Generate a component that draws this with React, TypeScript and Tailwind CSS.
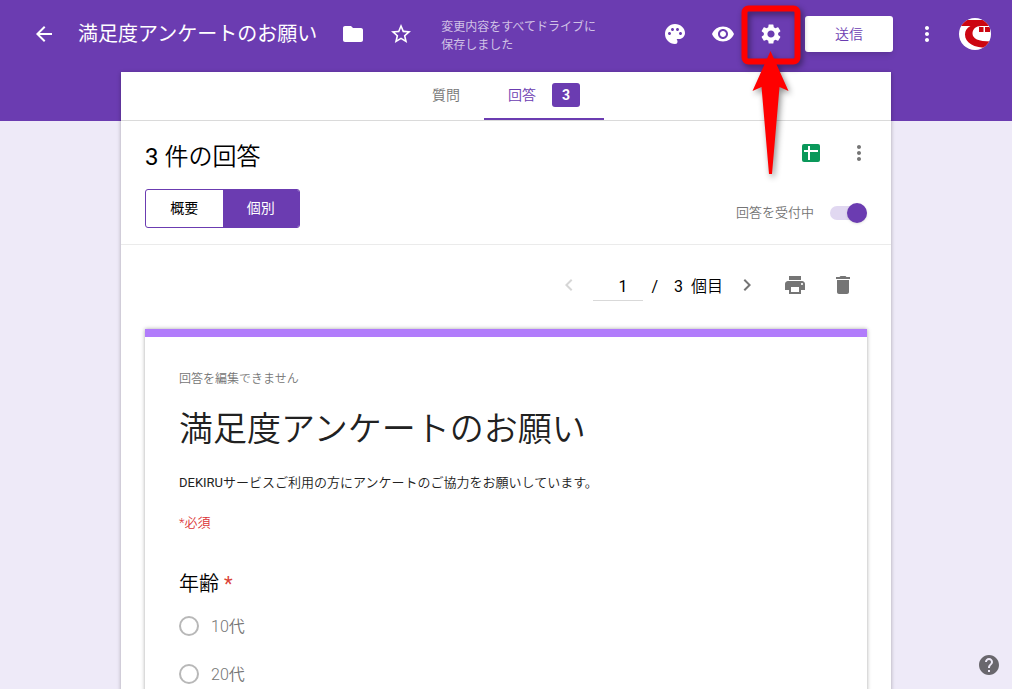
import React, { useState } from "react";
import {
  MdArrowBack,
  MdChevronLeft,
  MdChevronRight,
  MdDelete,
  MdFolder,
  MdHelp,
  MdMoreVert,
  MdPalette,
  MdPrint,
  MdSettings,
  MdStarBorder,
  MdVisibility,
} from "react-icons/md";

const ages = ["10代", "20代"];

function IconButton({
  label,
  children,
}: {
  label: string;
  children: React.ReactNode;
}) {
  return (
    <button
      type="button"
      aria-label={label}
      className="flex h-12 w-12 shrink-0 items-center justify-center text-2xl"
    >
      {children}
    </button>
  );
}

function Avatar() {
  return (
    <svg viewBox="0 0 32 32" className="h-8 w-8">
      <clipPath id="avatar-circle">
        <circle cx="16" cy="16" r="16" />
      </clipPath>
      <g clipPath="url(#avatar-circle)">
        <rect width="32" height="32" fill="#fff" />
        <path
          d="M0 2H32V8H22C17 8 13.500 11 13.500 15.500C13.500 20.500 19 23.500 32 23.500V30C15 30.500 6 25 6 16.500C6 12.500 8 10 11.500 8H0Z"
          fill="#cc0611"
        />
        <path d="M20 9H24.500V14H20ZM26 9H31V14H26Z" fill="#cc0611" />
      </g>
    </svg>
  );
}

function SettingsPointer() {
  return (
    <svg
      viewBox="0 0 72 184"
      className="pointer-events-none absolute -top-2.5 -left-3 h-[184px] w-[72px] drop-shadow-[2px_3px_3px_rgba(0,0,0,0.45)]"
    >
      <rect
        x="9.500"
        y="8.500"
        width="53"
        height="53"
        rx="4"
        fill="none"
        stroke="#ff0000"
        strokeWidth="6"
      />
      <path d="M35.500 51L53.500 91L44.500 87L37 174H34L26.500 87L17.500 91Z" fill="#ff0000" />
    </svg>
  );
}

function Header() {
  return (
    <header className="flex h-[68px] items-center pr-[21px] pl-5 text-white">
      <IconButton label="戻る">
        <MdArrowBack />
      </IconButton>
      <h1 className="mr-3 ml-2.5 text-xl whitespace-nowrap">
        満足度アンケートのお願い
      </h1>
      <IconButton label="フォルダ">
        <MdFolder />
      </IconButton>
      <IconButton label="スター">
        <MdStarBorder />
      </IconButton>
      <p className="ml-4 w-40 pt-1 text-xs leading-[18px] text-white/70">
        変更内容をすべてドライブに保存しました
      </p>
      <div className="ml-auto flex items-center">
        <IconButton label="テーマ">
          <MdPalette />
        </IconButton>
        <IconButton label="プレビュー">
          <MdVisibility />
        </IconButton>
        <div className="relative z-10">
          <IconButton label="設定">
            <MdSettings />
          </IconButton>
          <SettingsPointer />
        </div>
        <button
          type="button"
          className="mx-2.5 h-9 w-[88px] rounded-[3px] bg-white text-sm font-[350] text-[#6b3cb1] shadow-md"
        >
          送信
        </button>
        <IconButton label="その他">
          <MdMoreVert />
        </IconButton>
        <button type="button" aria-label="アカウント" className="ml-2">
          <Avatar />
        </button>
      </div>
    </header>
  );
}

function Tabs() {
  return (
    <nav className="flex h-[49px] justify-center border-b border-[#dadada] text-sm">
      <button type="button" className="px-6 pb-0.5 font-[350] text-[#757575]">
        質問
      </button>
      <button
        type="button"
        className="flex w-[120px] items-center gap-4 border-b-2 border-[#6b3cb1] pl-6 text-[#6b3cb1]"
      >
        <span className="font-[350]">回答</span>
        <span className="rounded-[3px] bg-[#6b3cb1] px-2.5 leading-6 font-bold text-white">
          3
        </span>
      </button>
    </nav>
  );
}

function Summary() {
  const [accepting, setAccepting] = useState(true);

  return (
    <section className="flex justify-between border-b border-[#ebebeb] px-6 pb-4">
      <div>
        <h2 className="pt-4 text-2xl leading-10 text-black">
          3 <span className="font-[350]">件の回答</span>
        </h2>
        <div className="mt-3 flex h-[39px] w-[155px] overflow-hidden rounded-[3px] border border-[#6b3cb1] text-sm">
          <button type="button" className="flex-1 pb-0.5 text-black">
            概要
          </button>
          <button type="button" className="flex-1 bg-[#6b3cb1] pb-0.5 text-white">
            個別
          </button>
        </div>
      </div>
      <div className="flex flex-col items-end justify-between pt-2">
        <div className="-mr-4 flex">
          <button
            type="button"
            aria-label="スプレッドシート"
            className="flex h-12 w-12 items-center justify-center"
          >
            <svg viewBox="0 0 18 18" className="h-[18px] w-[18px]">
              <rect width="18" height="18" rx="2" fill="#0a985a" />
              <path d="M6 2H8V6H16V8H8V16H6V8H2V6H6Z" fill="#fff" />
            </svg>
          </button>
          <div className="text-[#757575]">
            <IconButton label="メニュー">
              <MdMoreVert />
            </IconButton>
          </div>
        </div>
        <label className="flex h-[30px] items-center gap-4 text-[13px] font-[350] text-[#757575]">
          回答を受付中
          <span className="relative flex h-5 w-[37px] items-center">
            <input
              type="checkbox"
              checked={accepting}
              onChange={() => setAccepting(!accepting)}
              className="peer h-3.5 w-full appearance-none rounded-full bg-gray-300 checked:bg-[#e1d8f1]"
            />
            <span className="absolute left-0 h-5 w-5 rounded-full bg-white shadow-sm peer-checked:right-0 peer-checked:left-auto peer-checked:bg-[#6b3cb1]" />
          </span>
        </label>
      </div>
    </section>
  );
}

function Pager() {
  return (
    <div className="mb-1 flex h-20 items-center justify-end pr-6 text-black">
      <button
        type="button"
        aria-label="前へ"
        className="mr-3 text-2xl text-[#d6d6d6]"
      >
        <MdChevronLeft />
      </button>
      <input
        type="text"
        aria-label="回答番号"
        defaultValue="1"
        className="mr-2 h-8 w-[50px] border-b border-[#d9d9d9] pt-1 pr-4 text-right"
      />
      <span className="mr-4 pt-1">/</span>
      <span className="mr-2 pt-1">3</span>
      <span className="mr-3 pt-1 font-[350]">個目</span>
      <button type="button" aria-label="次へ" className="text-2xl text-[#757575]">
        <MdChevronRight />
      </button>
      <div className="ml-3 flex text-[#757575]">
        <IconButton label="印刷">
          <MdPrint />
        </IconButton>
        <IconButton label="削除">
          <MdDelete />
        </IconButton>
      </div>
    </div>
  );
}

function ResponseForm() {
  return (
    <form className="mx-6 border-t-8 border-[#b17cfb] bg-white px-[34px] pt-8 pb-10 shadow-[0_0_4px_rgba(0,0,0,0.35)]">
      <p className="text-xs leading-5 font-[350] text-[#757575]">
        回答を編集できません
      </p>
      <h2 className="mt-4 text-[34px] leading-12 font-[350] text-[#212121]">
        満足度アンケートのお願い
      </h2>
      <p className="mt-5 text-[13px] leading-5 text-[#212121]">
        DEKIRU
        <span className="font-[350]">
          サービスご利用の方にアンケートのご協力をお願いしています。
        </span>
      </p>
      <p className="mt-5 text-[13px] leading-5 font-[350] text-[#db3236]">
        *必須
      </p>
      <fieldset className="mt-[37px]">
        <legend className="mb-1 text-xl leading-7 font-[350] text-black">
          年齢 <span className="font-normal text-[#db4437]">*</span>
        </legend>
        {ages.map((age) => (
          <label
            key={age}
            className="flex h-12 items-center gap-3 font-[350] text-[#757575]"
          >
            <input
              type="radio"
              name="age"
              disabled
              className="h-5 w-5 appearance-none rounded-full border-2 border-[#b8b8b8]"
            />
            <span className="pt-0.5">{age}</span>
          </label>
        ))}
      </fieldset>
    </form>
  );
}

export default function App() {
  return (
    <div className="relative h-screen overflow-hidden bg-[#eeeaf8] font-['Roboto','Noto_Sans_CJK_JP',sans-serif]">
      <div className="h-[121px] bg-[#6b3cb1]">
        <Header />
      </div>
      <main className="mx-auto -mt-[49px] max-w-[770px] bg-white shadow-[0_1px_4px_rgba(0,0,0,0.3)]">
        <Tabs />
        <Summary />
        <Pager />
        <ResponseForm />
      </main>
      <button
        type="button"
        aria-label="ヘルプ"
        className="absolute right-[11px] bottom-3 text-2xl text-[#69676d]"
      >
        <MdHelp />
      </button>
    </div>
  );
}
